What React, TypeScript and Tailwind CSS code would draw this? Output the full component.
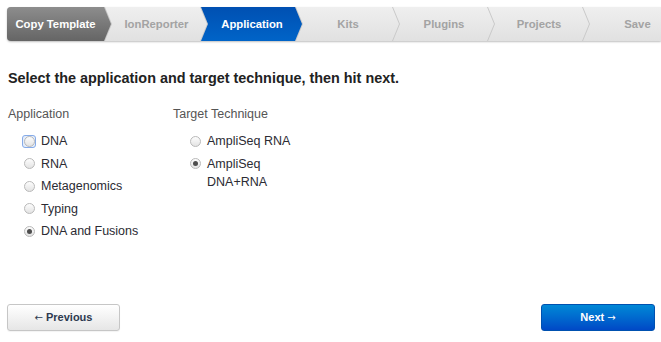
import React from 'react';

type Step = { label: string; width: number; state: 'done' | 'active' | 'todo' };

const steps: Step[] = [
  { label: 'Copy Template', width: 104, state: 'done' },
  { label: 'IonReporter', width: 102, state: 'todo' },
  { label: 'Application', width: 101, state: 'active' },
  { label: 'Kits', width: 103, state: 'todo' },
  { label: 'Plugins', width: 101, state: 'todo' },
  { label: 'Projects', width: 101, state: 'todo' },
  { label: 'Save', width: 108, state: 'todo' },
];

const applications = [
  { label: 'DNA', checked: false, focused: true },
  { label: 'RNA', checked: false },
  { label: 'Metagenomics', checked: false },
  { label: 'Typing', checked: false },
  { label: 'DNA and Fusions', checked: true },
];

const techniques = [
  { label: 'AmpliSeq RNA', checked: false },
  { label: 'AmpliSeq DNA+RNA', checked: true },
];

const Radio = ({ checked, focused }: { checked?: boolean; focused?: boolean }) => (
  <span
    className={`flex items-center justify-center w-[14px] h-[13px] rounded-[3px] shrink-0 ${
      focused ? 'border border-[#86abe8] bg-[#e4edfb]' : 'border border-transparent'
    }`}
  >
    <span className="flex items-center justify-center w-[11px] h-[11px] rounded-full border border-[#b9b9b9] bg-linear-to-b from-[#fdfdfd] to-[#e3e3e3]">
      {checked && <span className="w-[5px] h-[5px] rounded-full bg-[#4d4d4d]" />}
    </span>
  </span>
);

const Breadcrumb = () => (
  <div className="flex h-[34px] -mr-[7px] overflow-hidden rounded-l-[4px] bg-[#c9c9c9] shadow-[0_1px_2px_rgba(0,0,0,0.25)]">
    {steps.map((s, i) => {
      const bg =
        s.state === 'done'
          ? 'bg-linear-to-b from-[#8d8d8d] to-[#656565] text-white'
          : s.state === 'active'
          ? 'bg-linear-to-b from-[#0050b2] to-[#0064c8] text-white'
          : 'bg-linear-to-b from-[#efefef] to-[#e1e1e1] text-[#a3a3a3]';
      const clip =
        i === 0
          ? '[clip-path:polygon(0_0,calc(100%_-_7px)_0,100%_50%,calc(100%_-_7px)_100%,0_100%)]'
          : '[clip-path:polygon(0_0,calc(100%_-_7px)_0,100%_50%,calc(100%_-_7px)_100%,0_100%,7px_50%)]';
      return (
        <div
          key={s.label}
          style={{ width: s.width }}
          className={`${bg} ${clip} ${i === 0 ? 'pr-[7px]' : '-ml-[6px] pl-[8px] pr-[7px]'} shrink-0 flex items-center justify-center text-[11.3px] font-bold whitespace-nowrap`}
        >
          {s.label}
        </div>
      );
    })}
  </div>
);

export default function App() {
  return (
    <div className="h-[342px] w-[661px] overflow-hidden bg-white flex flex-col px-[7px] pt-[7px] pb-[11px] font-['Liberation_Sans',Arial,sans-serif] text-[#333]">
      <Breadcrumb />

      <h1 className="mt-[28px] ml-[1px] text-[14.4px] leading-[18px] font-bold text-[#222]">
        Select the application and target technique, then hit next.
      </h1>

      <div className="mt-[18px] ml-[1px] flex">
        <div className="w-[165px]">
          <div className="text-[12.5px] leading-[18px] text-[#555]">Application</div>
          <div className="mt-[9px] pl-[14px] flex flex-col gap-[4.5px]">
            {applications.map(a => (
              <label key={a.label} className="flex items-center gap-[5px] text-[12.5px] leading-[18px] text-[#2b2b33]">
                <Radio checked={a.checked} focused={a.focused} />
                {a.label}
              </label>
            ))}
          </div>
        </div>

        <div className="w-[140px]">
          <div className="text-[12.5px] leading-[18px] text-[#555]">Target Technique</div>
          <div className="mt-[9px] pl-[15px] flex flex-col gap-[4.5px]">
            {techniques.map(t => (
              <label key={t.label} className="flex items-start gap-[5px] text-[12.5px] leading-[18px] text-[#2b2b33]">
                <span className="mt-[2.5px]">
                  <Radio checked={t.checked} />
                </span>
                <span className="max-w-[92px]">{t.label}</span>
              </label>
            ))}
          </div>
        </div>
      </div>

      <div className="mt-auto flex justify-between">
        <button className="w-[113px] h-[27px] rounded-[3px] border border-[#c6c6c6] bg-linear-to-b from-white to-[#e6e6e6] text-[11px] font-bold text-[#2d3a4f] shadow-[0_1px_1px_rgba(0,0,0,0.05)]">
          <span className="font-['DejaVu_Sans'] font-normal text-[10px]">←</span> Previous
        </button>
        <button className="w-[114px] h-[27px] mr-[-1px] rounded-[3px] border border-[#0051b0] bg-linear-to-b from-[#0088d6] to-[#0048c6] text-[11px] font-bold text-white">
          Next <span className="font-['DejaVu_Sans'] font-normal text-[10px]">→</span>
        </button>
      </div>
    </div>
  );
}
